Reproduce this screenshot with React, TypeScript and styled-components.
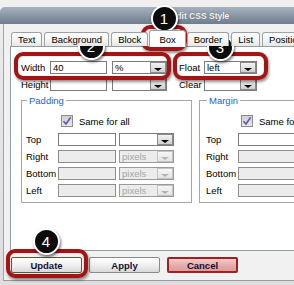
import React from 'react'
import styled, { createGlobalStyle } from 'styled-components'

const GlobalStyle = createGlobalStyle`
  html, body {
    margin: 0;
    padding: 0;
  }
  body {
    background: #e4e4e4;
    font-family: "Liberation Sans", Arial, sans-serif;
  }
`

const TABS = ['Text', 'Background', 'Block', 'Box', 'Border', 'List', 'Position']
const ACTIVE_TAB = 'Box'
const SIDES = ['Top', 'Right', 'Bottom', 'Left']

const callouts = [
  { n: 1, cx: 164, cy: 18 },
  { n: 2, cx: 91, cy: 46 },
  { n: 3, cx: 220, cy: 47 },
  { n: 4, cx: 46, cy: 241 },
]

const highlights = [
  { x: 141, y: 25, w: 46, h: 26 },
  { x: 14, y: 52, w: 157, h: 28 },
  { x: 173, y: 52, w: 95, h: 28 },
  { x: 6, y: 249, w: 82, h: 29 },
]

export default function App() {
  return (
    <>
      <GlobalStyle />
      <Screen>
        <Frame>
          <TitleBar>Edit CSS Style</TitleBar>
          <Body>
            <TabRow>
              {TABS.map((t) => (
                <Tab key={t} $active={t === ACTIVE_TAB}>
                  {t}
                </Tab>
              ))}
            </TabRow>

            <Panel>
              <FieldRow>
                <Label $width={29}>Width</Label>
                <TextBox $width={57} value="40" readOnly />
                <Select $width={55} $gap={5} value="%" />
                <Label $width={25} $gap={12}>Float</Label>
                <Select $width={53} value="left" />
              </FieldRow>
              <FieldRow>
                <Label $width={29}>Height</Label>
                <TextBox $width={57} readOnly />
                <Select $width={55} $gap={5} />
                <Label $width={25} $gap={12}>Clear</Label>
                <Select $width={53} />
              </FieldRow>

              <Groups>
                <SpacingGroup title="Padding" inset={4} />
                <SpacingGroup title="Margin" inset={6} />
              </Groups>
            </Panel>

            <ButtonRow>
              <Button $variant="default">Update</Button>
              <Button>Apply</Button>
              <Button $variant="danger">Cancel</Button>
            </ButtonRow>
          </Body>
        </Frame>

        {highlights.map((h, i) => (
          <Highlight key={i} $x={h.x} $y={h.y} $w={h.w} $h={h.h} />
        ))}
        {callouts.map((c) => (
          <Badge key={c.n} $cx={c.cx} $cy={c.cy}>
            {c.n}
          </Badge>
        ))}
      </Screen>
    </>
  )
}

function SpacingGroup({ title, inset }: { title: string; inset: number }) {
  return (
    <Group $inset={inset}>
      <Legend>{title}</Legend>
      <CheckRow>
        <CheckBox>
          <svg width="10" height="10" viewBox="0 0 10 10">
            <path d="M1.5 5.2 L4 8 L8.6 1.4" fill="none" stroke="#5656a8" strokeWidth="1.6" />
          </svg>
        </CheckBox>
        <span>Same for all</span>
      </CheckRow>
      {SIDES.map((side, i) => (
        <SideRow key={side}>
          <Label $width={32}>{side}</Label>
          <TextBox $width={58} disabled={i > 0} readOnly />
          <Select $width={55} $gap={3} $disabled={i > 0} value={i > 0 ? 'pixels' : ''} />
        </SideRow>
      ))}
    </Group>
  )
}

function Select({
  $width,
  $gap = 0,
  $disabled = false,
  value = '',
}: {
  $width: number
  $gap?: number
  $disabled?: boolean
  value?: string
}) {
  return (
    <SelectBox $width={$width} $gap={$gap} $disabled={$disabled}>
      <SelectValue>{value}</SelectValue>
      <DropButton $disabled={$disabled} />
    </SelectBox>
  )
}

const Screen = styled.div`
  position: relative;
  width: 294px;
  height: 285px;
  overflow: hidden;
  box-sizing: border-box;
  padding-top: 7px;
  background: linear-gradient(#f0f0f0, #e6e6e6 30%, #dedede);
`

const Frame = styled.div`
  width: 400px;
`

const TitleBar = styled.div`
  height: 17px;
  border-radius: 5px 0 0 0;
  background: linear-gradient(#a6b2be, #8794a2 55%, #6f7e8d);
  color: #f6f6f6;
  font-size: 8.5px;
  font-weight: bold;
  display: flex;
  align-items: center;
  justify-content: center;
  text-shadow: 0 0 1px #4e5c6a;
`

const Body = styled.div`
  box-sizing: border-box;
  height: 257px;
  margin-left: 3px;
  padding: 6px 0 0 6px;
  background: #f1f1f1;
  border-left: 1px solid #b59c9c;
  border-bottom: 1px solid #9c9c9c;
`

const TabRow = styled.div`
  display: flex;
  align-items: flex-end;
  gap: 2px;
  height: 16px;
  margin-left: 1px;
  position: relative;
  z-index: 1;
`

const Tab = styled.div<{ $active: boolean }>`
  box-sizing: border-box;
  height: ${({ $active }) => ($active ? 17 : 14)}px;
  margin: 0 ${({ $active }) => ($active ? '-1px' : '0')};
  margin-bottom: ${({ $active }) => ($active ? '-1px' : '0')};
  padding: 0 ${({ $active }) => ($active ? 9 : 6)}px;
  display: flex;
  align-items: center;
  font-size: 9.5px;
  color: #000;
  white-space: nowrap;
  border: 1px solid #9aa2a6;
  border-bottom: none;
  border-radius: 3px 3px 0 0;
  background: ${({ $active }) =>
    $active ? '#ffffff' : 'linear-gradient(#ffffff, #f3f3f1 60%, #e6e6e2)'};
`

const Panel = styled.div`
  box-sizing: border-box;
  height: 205px;
  padding: 14px 0 0 10px;
  background: #ffffff;
  border: 1px solid #939ca0;
`

const FieldRow = styled.div`
  display: flex;
  align-items: center;
  height: 13px;
  margin-bottom: 4px;
`

const Label = styled.span<{ $width: number; $gap?: number }>`
  width: ${({ $width }) => $width}px;
  margin-left: ${({ $gap = 0 }) => $gap}px;
  flex: none;
  font-size: 9.5px;
  color: #000;
  white-space: nowrap;
`

const TextBox = styled.input<{ $width: number }>`
  box-sizing: border-box;
  width: ${({ $width }) => $width}px;
  height: 13px;
  margin: 0;
  padding: 0 2px;
  flex: none;
  font: 9.5px "Liberation Sans", Arial, sans-serif;
  color: #000;
  border: 1px solid #7c7c7c;
  border-radius: 0;
  background: #ffffff;
  outline: none;

  &:disabled {
    background: #ececec;
    border-color: #8e8e8e;
  }
`

const SelectBox = styled.div<{ $width: number; $gap: number; $disabled: boolean }>`
  box-sizing: border-box;
  width: ${({ $width }) => $width}px;
  height: 13px;
  margin-left: ${({ $gap }) => $gap}px;
  flex: none;
  display: flex;
  align-items: stretch;
  border: 1px solid ${({ $disabled }) => ($disabled ? '#9a9a9a' : '#7c7c7c')};
  background: ${({ $disabled }) => ($disabled ? '#ececec' : '#ffffff')};
  color: ${({ $disabled }) => ($disabled ? '#a6a6a6' : '#000')};
`

const SelectValue = styled.span`
  flex: 1;
  padding-left: 2px;
  font-size: 9.5px;
  line-height: 11px;
  white-space: nowrap;
  overflow: hidden;
`

const DropButton = styled.span<{ $disabled: boolean }>`
  position: relative;
  width: 16px;
  flex: none;
  box-sizing: border-box;
  border: 1px solid ${({ $disabled }) => ($disabled ? '#c4c4c4' : '#8a8a8a')};
  background: ${({ $disabled }) =>
    $disabled ? 'linear-gradient(#f6f6f6, #e4e4e4)' : 'linear-gradient(#f2f2f2, #cfcfcf)'};

  &::after {
    content: "";
    position: absolute;
    left: 50%;
    bottom: 1px;
    margin-left: -4px;
    border-left: 4px solid transparent;
    border-right: 4px solid transparent;
    border-top: 3px solid ${({ $disabled }) => ($disabled ? '#b4b4b4' : '#000')};
  }
`

const Groups = styled.div`
  display: flex;
  gap: 7px;
  margin-top: 1px;
`

const Group = styled.fieldset<{ $inset: number }>`
  box-sizing: border-box;
  width: 171px;
  flex: none;
  margin: 0;
  padding: 9px 0 5px ${({ $inset }) => $inset}px;
  border: 1px solid #a6a6a6;
  min-width: 0;
`

const Legend = styled.legend`
  margin-left: 1px;
  padding: 0 2px;
  font-size: 9.5px;
  line-height: 11px;
  color: #1f62c4;
`

const CheckRow = styled.div`
  display: flex;
  align-items: center;
  gap: 6px;
  height: 12px;
  margin: 0 0 6px 35px;
  font-size: 9.5px;
  color: #000;
  white-space: nowrap;
`

const CheckBox = styled.span`
  box-sizing: border-box;
  width: 12px;
  height: 12px;
  display: flex;
  align-items: center;
  justify-content: center;
  border: 1px solid #8c8c8c;
  background: linear-gradient(#d0d0d0, #e8e8e8);
`

const SideRow = styled.div`
  display: flex;
  align-items: center;
  height: 13px;
  margin-bottom: 4px;

  &:last-child {
    margin-bottom: 0;
  }
`

const ButtonRow = styled.div`
  display: flex;
  gap: 7px;
  margin: 6px 0 0 1px;
`

const Button = styled.button<{ $variant?: 'default' | 'danger' }>`
  box-sizing: border-box;
  width: 71px;
  height: 16px;
  padding: 0;
  font: bold 9.5px "Liberation Sans", Arial, sans-serif;
  color: #111133;
  border-radius: 2px;
  border: ${({ $variant }) =>
    $variant === 'danger'
      ? '2px solid #9e2020'
      : $variant === 'default'
        ? '1px solid #5a5a3a'
        : '1px solid #8a8a8a'};
  background: ${({ $variant }) =>
    $variant === 'danger'
      ? 'linear-gradient(#f4caca, #e4a8a8 60%, #dc9c9c)'
      : 'linear-gradient(#ffffff, #eeeeee 55%, #d8d8d8)'};
`

const Highlight = styled.div<{ $x: number; $y: number; $w: number; $h: number }>`
  position: absolute;
  left: ${({ $x }) => $x}px;
  top: ${({ $y }) => $y}px;
  width: ${({ $w }) => $w}px;
  height: ${({ $h }) => $h}px;
  box-sizing: border-box;
  border: 4px solid #a31414;
  border-radius: 9px;
  box-shadow: 1px 2px 3px rgba(0, 0, 0, 0.45), inset 0 0 1px rgba(60, 0, 0, 0.6);
  pointer-events: none;
`

const Badge = styled.div<{ $cx: number; $cy: number }>`
  position: absolute;
  left: ${({ $cx }) => $cx - 13.5}px;
  top: ${({ $cy }) => $cy - 13.5}px;
  width: 27px;
  height: 27px;
  box-sizing: border-box;
  border: 2px solid #ffffff;
  border-radius: 50%;
  background: #0c0c0c;
  color: #ffffff;
  font-size: 15px;
  display: flex;
  align-items: center;
  justify-content: center;
  box-shadow: 1px 2px 3px rgba(0, 0, 0, 0.55);
`
